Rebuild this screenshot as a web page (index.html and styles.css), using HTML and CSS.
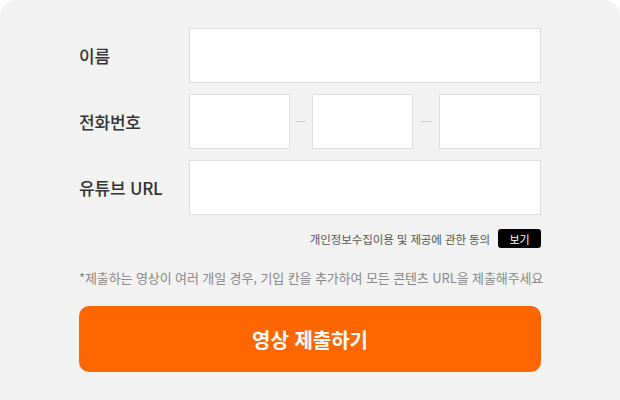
FILE: index.html
```html
<!DOCTYPE html>
<html lang="ko">
<head>
    <meta charset="UTF-8">
    <meta name="viewport" content="width=device-width, initial-scale=1.0">
    <title>영상 제출</title>
    <link rel="stylesheet" href="styles.css">
</head>
<body>
    <section class="form_box">
        <div class="form_row">
            <label class="row_label">이름</label>
            <input class="text_input" type="text">
        </div>
        <div class="form_row">
            <label class="row_label">전화번호</label>
            <div class="phone_div">
                <input class="text_input" type="text">
                <span class="dash"></span>
                <input class="text_input" type="text">
                <span class="dash"></span>
                <input class="text_input" type="text">
            </div>
        </div>
        <div class="form_row">
            <label class="row_label">유튜브 URL</label>
            <input class="text_input" type="text">
        </div>
        <div class="agree_div">
            <span>개인정보수집이용 및 제공에 관한 동의</span>
            <button class="view_btn">보기</button>
        </div>
        <p class="note">*제출하는 영상이 여러 개일 경우, 기입 칸을 추가하여 모든 콘텐츠 URL을 제출해주세요</p>
        <button class="submit_btn">영상 제출하기</button>
    </section>
</body>
</html>
```

FILE: styles.css
```css
*{
    margin:0;
    padding:0;
    box-sizing:border-box;
}
body{
    background-color:#ffffff;
    font-family:"Noto Sans CJK KR", "Noto Sans", sans-serif;
}
.form_box{
    width:620px;
    height:400px;
    background-color:#f2f2f2;
    border-radius:16px 16px 0 0;
    padding:28px 79px 0 79px;
}
.form_row{
    display:flex;
    align-items:center;
    height:55px;
    margin-bottom:11px;
}
.row_label{
    width:110px;
    flex-shrink:0;
    font-size:17px;
    font-weight:500;
    color:#333333;
    letter-spacing:-0.2px;
}
.text_input{
    flex:1;
    min-width:0;
    height:55px;
    border:1px solid #dddddd;
    background-color:#ffffff;
    outline:none;
}
.phone_div{
    flex:1;
    display:flex;
    align-items:center;
}
.phone_div .text_input{
    width:101px;
    flex:none;
}
.phone_div .text_input:last-child{
    flex:1;
}
.dash{
    width:22px;
    display:flex;
    justify-content:center;
}
.dash::after{
    content:"";
    width:10px;
    height:1px;
    background-color:#cccccc;
}
.phone_div .dash:nth-child(4){
    width:26px;
}
.agree_div{
    display:flex;
    justify-content:flex-end;
    align-items:center;
    margin-top:14px;
    font-size:11.5px;
    color:#555555;
    letter-spacing:-0.1px;
}
.view_btn{
    margin-left:8px;
    width:43px;
    height:19px;
    border:none;
    border-radius:3px;
    background-color:#000000;
    color:#ffffff;
    font-family:inherit;
    font-size:11px;
}
.note{
    margin-top:20px;
    font-size:13px;
    color:#888888;
    letter-spacing:-0.1px;
    white-space:nowrap;
}
.submit_btn{
    margin-top:19px;
    width:100%;
    height:66px;
    border:none;
    border-radius:10px;
    background-color:#ff6600;
    color:#ffffff;
    font-family:inherit;
    font-size:20px;
    font-weight:700;
}
```
